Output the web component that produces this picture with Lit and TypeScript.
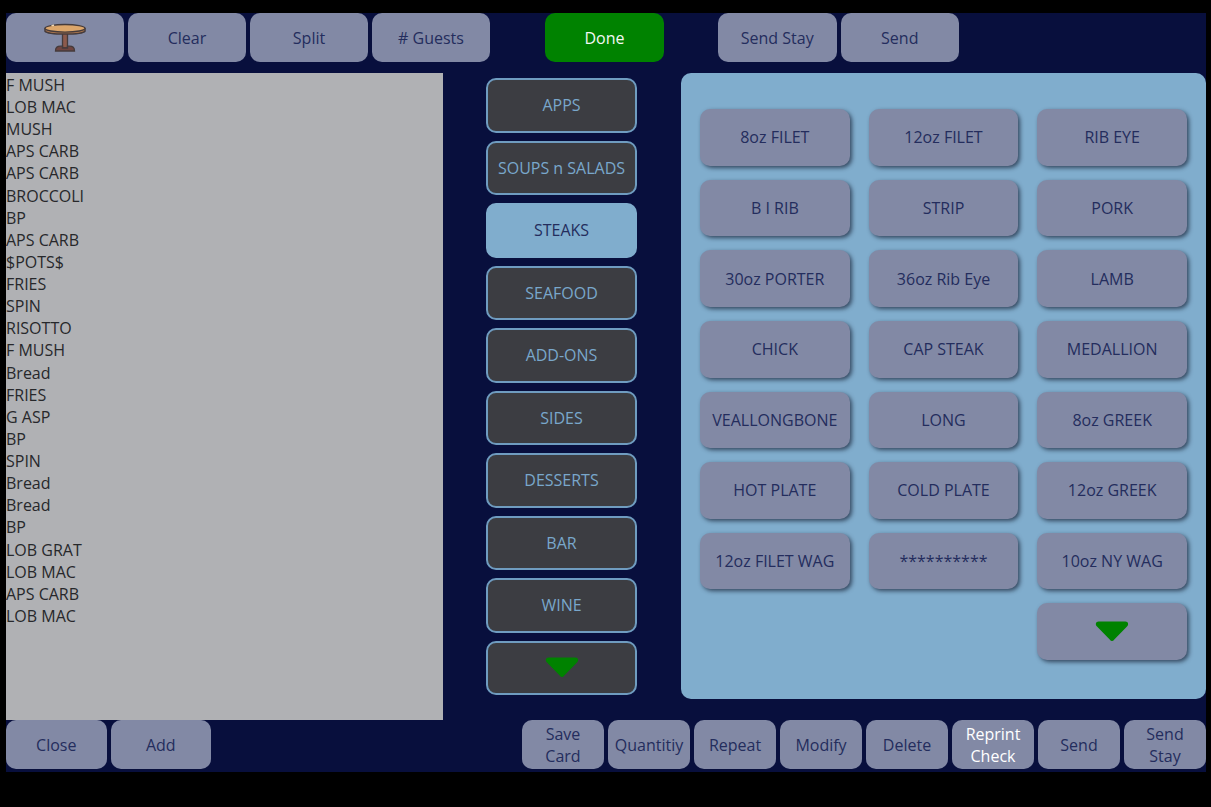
import { LitElement, html, css, svg } from "lit";
import { customElement, property, state } from "lit/decorators.js";
import { classMap } from "lit/directives/class-map.js";

const ORDER = [
  "F MUSH", "LOB MAC", "MUSH", "APS CARB", "APS CARB", "BROCCOLI", "BP",
  "APS CARB", "$POTS$", "FRIES", "SPIN", "RISOTTO", "F MUSH", "Bread",
  "FRIES", "G ASP", "BP", "SPIN", "Bread", "Bread", "BP", "LOB GRAT",
  "LOB MAC", "APS CARB", "LOB MAC",
];

const CATEGORIES = [
  "APPS", "SOUPS n SALADS", "STEAKS", "SEAFOOD", "ADD-ONS", "SIDES",
  "DESSERTS", "BAR", "WINE",
];

const ITEMS = [
  "8oz FILET", "12oz FILET", "RIB EYE",
  "B I RIB", "STRIP", "PORK",
  "30oz PORTER", "36oz Rib Eye", "LAMB",
  "CHICK", "CAP STEAK", "MEDALLION",
  "VEALLONGBONE", "LONG", "8oz GREEK",
  "HOT PLATE", "COLD PLATE", "12oz GREEK",
  "12oz FILET WAG", "**********", "10oz NY WAG",
];

const ACTIONS = [
  "Save Card", "Quantitiy", "Repeat", "Modify", "Delete", "Reprint Check",
  "Send", "Send Stay",
];

const buttonReset = css`
  * {
    box-sizing: border-box;
  }
  button {
    margin: 0;
    padding: 0;
    border: 0;
    border-radius: 10px;
    background: #8289a5;
    color: #242d5d;
    font: inherit;
    line-height: 22px;
    cursor: pointer;
    display: flex;
    align-items: center;
    justify-content: center;
    text-align: center;
  }
`;

const caret = svg`
  <svg width="34" height="24" viewBox="0 0 34 24" aria-hidden="true">
    <path d="M3.6 1.5H30.4C33.2 1.5 34 4.6 32 6.5L19.3 19.4C17.8 21.4 16.2 21.4 14.7 19.4L2 6.5C0 4.6 0.8 1.5 3.6 1.5Z" fill="#008200"/>
  </svg>`;

@customElement("category-list")
class CategoryList extends LitElement {
  @property({ attribute: false }) categories: string[] = [];
  @property() selected = "";

  static styles = [
    buttonReset,
    css`
      :host {
        display: block;
      }
      .list {
        display: grid;
        grid-auto-rows: 1fr;
        gap: 8px;
        height: 100%;
        padding: 5px 0 4px;
      }
      .category {
        border: 2px solid #6f9cc0;
        background: #3c3d42;
        color: #79a7cb;
      }
      .selected {
        border-color: #80adcd;
        background: #80adcd;
        color: #242d5d;
      }
    `,
  ];

  private pick(name: string) {
    this.dispatchEvent(new CustomEvent("pick", { detail: name }));
  }

  render() {
    return html`<nav class="list" aria-label="Categories">
      ${this.categories.map(
        (c) => html`<button
          class=${classMap({ category: true, selected: c === this.selected })}
          aria-pressed=${c === this.selected}
          @click=${() => this.pick(c)}
        >${c}</button>`
      )}
      <button class="category" aria-label="More categories">${caret}</button>
    </nav>`;
  }
}

@customElement("item-panel")
class ItemPanel extends LitElement {
  @property({ attribute: false }) items: string[] = [];

  static styles = [
    buttonReset,
    css`
      :host {
        display: block;
      }
      .panel {
        display: grid;
        grid-template-columns: repeat(3, 1fr);
        grid-auto-rows: 1fr;
        column-gap: 19px;
        row-gap: 14px;
        height: 100%;
        padding: 36px 19px 39px;
        border-radius: 10px;
        background: #80adcd;
      }
      .item {
        box-shadow: 2px 2px 4px rgba(20, 30, 50, 0.7);
      }
      .more {
        grid-column: 3;
      }
    `,
  ];

  render() {
    return html`<section class="panel" aria-label="Items">
      ${this.items.map((i) => html`<button class="item">${i}</button>`)}
      <button class="item more" aria-label="More items">${caret}</button>
    </section>`;
  }
}

@customElement("app-root")
export class AppRoot extends LitElement {
  @state() private selected = "STEAKS";

  static styles = [
    buttonReset,
    css`
      :host {
        box-sizing: border-box;
        min-height: 100vh;
        padding: 13px 5px 35px 6px;
        background: #000;
        color: #27282b;
        font: 16px/22px "Open Sans", "Noto Sans", sans-serif;
        display: flex;
      }
      .screen {
        flex: 1;
        display: flex;
        flex-direction: column;
        min-width: 0;
        padding-bottom: 3px;
        background: #080f3d;
      }
      .bar button {
        height: 49px;
      }
      .top {
        display: grid;
        grid-template-columns: 484fr 55fr 119fr 54fr 241fr 247fr;
        margin-bottom: 11px;
      }
      .group {
        display: grid;
        grid-auto-flow: column;
        grid-auto-columns: 1fr;
        gap: 4px;
      }
      .done-slot {
        grid-column: 3;
      }
      .send-slot {
        grid-column: 5;
      }
      .done-slot .done {
        background: #008200;
        color: #f4f8f4;
      }
      .main {
        flex: 1;
        display: grid;
        grid-template-columns: 437fr 43fr 151fr 44fr 525fr;
      }
      .order {
        display: grid;
        grid-auto-rows: 1fr;
        margin: 0;
        padding: 1px 0 93px;
        list-style: none;
        background: #b0b1b4;
      }
      category-list {
        grid-column: 3;
        margin-bottom: 21px;
      }
      item-panel {
        grid-column: 5;
        margin-bottom: 21px;
      }
      .bottom {
        display: grid;
        grid-template-columns: 205fr 311fr 684fr;
      }
      .actions {
        grid-column: 3;
      }
      .actions button {
        padding: 0 6px;
      }
      .actions .notice {
        color: #fff;
      }
    `,
  ];

  render() {
    return html`<div class="screen">
      <header class="bar top">
        <div class="group">
          <button aria-label="Table">
            <svg width="42" height="30" viewBox="0 0 42 30" aria-hidden="true">
              <path d="M18.5 10H23.5V25H18.5Z" fill="#8c5a4c" stroke="#453b3c" stroke-width="1.3"/>
              <path d="M11.5 28C11.5 24.5 13.5 23.2 16.5 23.2H18.5V25H23.5V23.2H25.5C28.5 23.2 30.5 24.5 30.5 28Z" fill="#6e4440" stroke="#453b3c" stroke-width="1.3"/>
              <path d="M1 5.5V8.2C4 12 38 12 41 8.2V5.5Z" fill="#b0794e" stroke="#453b3c" stroke-width="1.5" stroke-linejoin="round"/>
              <ellipse cx="21" cy="5.3" rx="20" ry="3.8" fill="#dca66b" stroke="#453b3c" stroke-width="1.3"/>
              <path d="M8 2.6L9.5 2.3" stroke="#f3d9b5" stroke-width="1.4" stroke-linecap="round"/>
            </svg>
          </button>
          <button>Clear</button>
          <button>Split</button>
          <button># Guests</button>
        </div>
        <div class="group done-slot"><button class="done">Done</button></div>
        <div class="group send-slot">
          <button>Send Stay</button>
          <button>Send</button>
        </div>
      </header>
      <main class="main">
        <ul class="order">
          ${ORDER.map((o) => html`<li>${o}</li>`)}
        </ul>
        <category-list
          .categories=${CATEGORIES}
          selected=${this.selected}
          @pick=${(e: CustomEvent<string>) => (this.selected = e.detail)}
        ></category-list>
        <item-panel .items=${ITEMS}></item-panel>
      </main>
      <footer class="bar bottom">
        <div class="group">
          <button>Close</button>
          <button>Add</button>
        </div>
        <div class="group actions">
          ${ACTIONS.map(
            (a) => html`<button
              class=${classMap({ notice: a === "Reprint Check" })}
            >${a}</button>`
          )}
        </div>
      </footer>
    </div>`;
  }
}
